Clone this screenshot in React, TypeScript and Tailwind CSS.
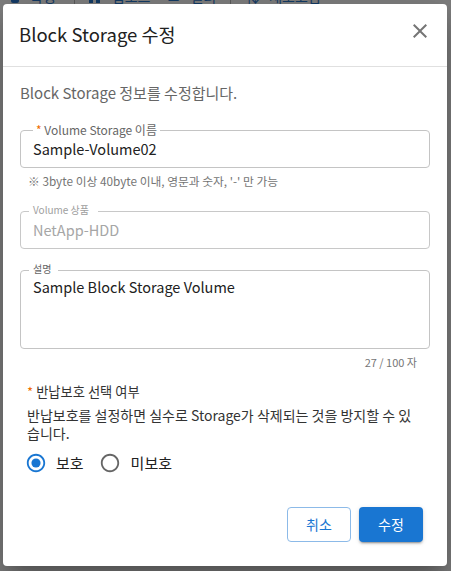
import React from "react";

function RadioIcon({ checked }: { checked: boolean }) {
  return (
    <svg width="22" height="22" viewBox="0 0 24 24" fill={checked ? "#1976d2" : "#666666"}>
      <path d="M12 2C6.48 2 2 6.48 2 12s4.48 10 10 10 10-4.48 10-10S17.52 2 12 2zm0 18c-4.42 0-8-3.58-8-8s3.58-8 8-8 8 3.58 8 8-3.58 8-8 8z" />
      {checked && <circle cx="12" cy="12" r="5" />}
    </svg>
  );
}

export default function App() {
  return (
    <div className="relative w-[451px] h-[571px] overflow-hidden bg-[#7f7f7f] pt-[4px] pl-[3px] font-['Noto_Sans_CJK_KR',sans-serif]">
      {/* page behind the overlay, only its bottom edge peeks out */}
      <div className="absolute left-0 top-[-12px] flex items-center h-[16px] text-[14px] leading-[16px] text-[#143b66] whitespace-nowrap">
        <span className="ml-[11px] w-[8px] h-[14px] rounded-[2px] bg-[#143b66]" />
        <span className="ml-[11px]">확정</span>
        <span className="ml-[18px] w-px h-[16px] bg-[#5c5c5c]" />
        <span className="ml-[14px] w-[4px] h-[14px] bg-[#143b66]" />
        <span className="ml-[3px] w-[4px] h-[14px] bg-[#143b66]" />
        <span className="ml-[12px]">업로드</span>
        <span className="ml-[16px]">≡</span>
        <span className="ml-[10px]">필터</span>
        <span className="ml-[14px] w-px h-[16px] bg-[#5c5c5c]" />
        <span className="ml-[14px]">⇅</span>
        <span className="ml-[10px]">새로고침</span>
      </div>

      <div className="relative w-[444px] h-[562px] bg-white rounded-[4px] flex flex-col shadow-[0_11px_15px_-7px_rgba(0,0,0,0.2),0_24px_38px_3px_rgba(0,0,0,0.14),0_9px_46px_8px_rgba(0,0,0,0.12)]">
        {/* title */}
        <div className="flex items-start justify-between pl-[16px] pr-[15px] pt-[14px] pb-[16px] border-b border-[#e0e0e0]">
          <h2 className="text-[18.5px] leading-[32px] font-normal text-[#212121]">Block Storage 수정</h2>
          <svg className="mt-[1px]" width="24" height="24" viewBox="0 0 24 24" fill="#757575">
            <path d="M19 6.41 17.59 5 12 10.59 6.41 5 5 6.41 10.59 12 5 17.59 6.41 19 12 13.41 17.59 19 19 17.59 13.41 12z" />
          </svg>
        </div>

        {/* content */}
        <div className="px-[17px] pt-[14px]">
          <p className="text-[15px] leading-[24px] text-[#666666]">Block Storage 정보를 수정합니다.</p>

          {/* volume name */}
          <div className="relative mt-[25px] h-[38px] rounded-[4px] border border-[#c4c4c4] px-[12px] pt-[6px]">
            <span className="absolute top-[-7px] left-[12px] px-[3px] bg-white text-[12px] leading-[12px] text-[#666666] whitespace-nowrap">
              <span className="text-[#ef6c00]">*</span> Volume Storage 이름
            </span>
            <div className="text-[14.5px] leading-[24px] text-[#212121]">Sample-Volume02</div>
          </div>
          <p className="mt-[5px] ml-[8px] text-[11.75px] leading-[16px] text-[#757575]">
            ※ 3byte 이상 40byte 이내, 영문과 숫자, '-' 만 가능
          </p>

          {/* product (disabled) */}
          <div className="relative mt-[22px] h-[38px] rounded-[4px] border border-[#c8c8c8] px-[12px] pt-[6px]">
            <span className="absolute top-[-8px] left-[8px] pl-[4px] pr-[9px] bg-white text-[10px] leading-[12px] text-[#9e9e9e] whitespace-nowrap">
              Volume 상품
            </span>
            <div className="text-[14.5px] leading-[24px] text-[#a6a6a6]">NetApp-HDD</div>
          </div>

          {/* description */}
          <div className="relative mt-[21px] h-[79px] rounded-[4px] border border-[#c4c4c4] px-[12px] pt-[4px]">
            <span className="absolute top-[-8px] left-[8px] pl-[4px] pr-[7px] bg-white text-[10px] leading-[12px] text-[#666666] whitespace-nowrap">
              설명
            </span>
            <div className="text-[14.5px] leading-[24px] text-[#212121]">Sample Block Storage Volume</div>
          </div>
          <p className="mt-[5px] pr-[13px] text-right text-[11px] leading-[16px] text-[#757575]">27 / 100 자</p>

          {/* protection */}
          <div className="pl-[7px]">
            <p className="mt-[12px] text-[13.25px] leading-[20px] text-[#333333]">
              <span className="text-[#ef6c00]">*</span> 반납보호 선택 여부
            </p>
            <p className="mt-[4px] text-[14px] leading-[18px] text-[#333333]">
              반납보호를 설정하면 실수로 Storage가 삭제되는 것을 방지할 수 있
              <br />
              습니다.
            </p>
          </div>
          <div className="mt-[10px] pl-[5px] flex items-center">
            <label className="flex items-center">
              <RadioIcon checked />
              <span className="ml-[9px] text-[15px] leading-[22px] text-[#212121]">보호</span>
            </label>
            <label className="ml-[15px] flex items-center">
              <RadioIcon checked={false} />
              <span className="ml-[10px] text-[15px] leading-[22px] text-[#212121]">미보호</span>
            </label>
          </div>
        </div>

        {/* actions */}
        <div className="mt-auto flex justify-end gap-[8px] pr-[24px] pb-[24px]">
          <button className="w-[64px] h-[35px] rounded-[4px] border border-[#8cbae8] bg-white text-[14px] text-[#1976d2]">
            취소
          </button>
          <button className="w-[64px] h-[35px] rounded-[4px] bg-[#1976d2] text-[14px] text-white shadow-[0_3px_1px_-2px_rgba(0,0,0,0.2),0_2px_2px_0_rgba(0,0,0,0.14),0_1px_5px_0_rgba(0,0,0,0.12)]">
            수정
          </button>
        </div>
      </div>
    </div>
  );
}
